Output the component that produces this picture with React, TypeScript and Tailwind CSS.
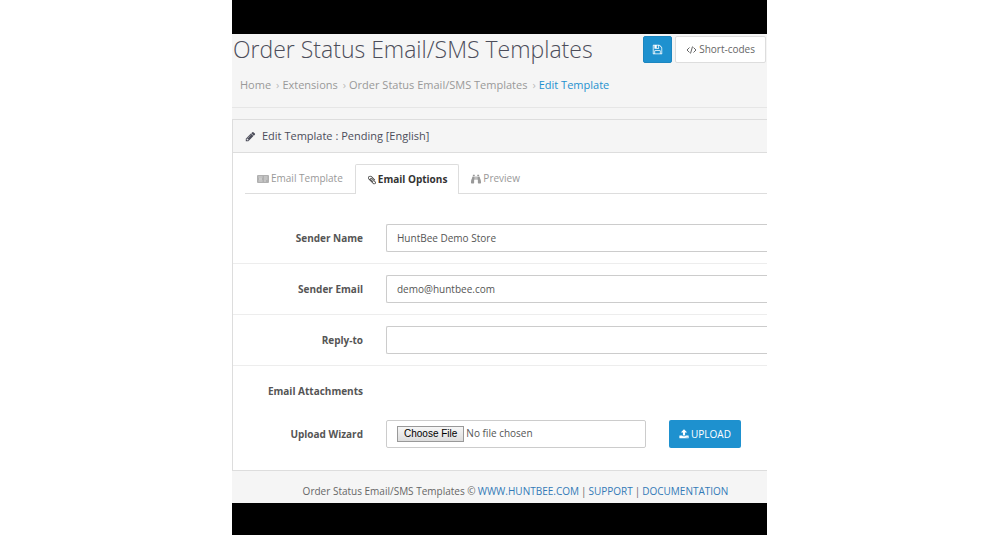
import React from "react";
import { FaBinoculars } from "react-icons/fa";

type GlyphProps = {
  path: string;
  className?: string;
};

const floppy =
  "M512 1536h768v-384h-768v384zm896 0h128v-896q0-14-10-38.5t-20-34.5l-281-281q-10-10-34-20t-39-10v416q0 40-28 68t-68 28h-576q-40 0-68-28t-28-68v-416h-128v1280h128v-416q0-40 28-68t68-28h832q40 0 68 28t28 68v416zm-384-928v-320q0-13-9.5-22.5t-22.5-9.5h-192q-13 0-22.5 9.5t-9.5 22.5v320q0 13 9.5 22.5t22.5 9.5h192q13 0 22.5-9.5t9.5-22.5zm640 32v928q0 40-28 68t-68 28h-1344q-40 0-68-28t-28-68v-1344q0-40 28-68t68-28h928q40 0 88 20t76 48l280 280q28 28 48 76t20 88z";
const pencil =
  "M491 1536l91-91-235-235-91 91v107h128v128h107zm523-928q0-22-22-22-10 0-17 7l-542 542q-7 7-7 17 0 22 22 22 10 0 17-7l542-542q7-7 7-17zm-54-192l416 416-832 832h-416v-416zm683 96q0 53-37 90l-166 166-416-416 166-165q36-38 90-38 53 0 91 38l235 234q37 39 37 91z";
const paperclip =
  "M1596 1385q0 117-79 196t-196 79q-135 0-235-100l-777-776q-113-115-113-271 0-159 110-270t269-111q158 0 273 113l605 606q10 10 10 22 0 16-30.5 46.5t-46.5 30.5q-13 0-23-10l-606-607q-79-77-181-77-106 0-179 75t-73 181q0 105 76 181l776 777q63 63 145 63 64 0 106-42t42-106q0-82-63-145l-581-581q-26-24-60-24-29 0-48 19t-19 48q0 32 25 59l410 410q10 10 10 22 0 16-31 47t-47 31q-12 0-22-10l-410-410q-63-61-63-149 0-82 57-139t139-57q88 0 149 63l581 581q100 98 100 235z";
const upload =
  "M1344 1472q0-26-19-45t-45-19-45 19-19 45 19 45 45 19 45-19 19-45zm256 0q0-26-19-45t-45-19-45 19-19 45 19 45 45 19 45-19 19-45zm128-224v320q0 40-28 68t-68 28h-1472q-40 0-68-28t-28-68v-320q0-40 28-68t68-28h427q21 56 70.5 92t110.5 36h256q61 0 110.5-36t70.5-92h427q40 0 68 28t28 68zm-325-648q-17 40-59 40h-256v448q0 26-19 45t-45 19h-256q-26 0-45-19t-19-45v-448h-256q-42 0-59-40-17-39 14-69l448-448q18-19 45-19t45 19l448 448q31 30 14 69z";

const Glyph = ({ path, className }: GlyphProps) => (
  <svg viewBox="0 0 1792 1792" fill="currentColor" className={className} aria-hidden="true">
    <path d={path} />
  </svg>
);

const CodeIcon = () => (
  <svg
    viewBox="0 0 11 10"
    fill="none"
    stroke="currentColor"
    className="h-2.5 w-[11px]"
    aria-hidden="true">
    <path d="M3.5 2.5 1 5l2.5 2.5M7.5 2.5 10 5 7.5 7.5M6.5 1.5l-2 7" />
  </svg>
);

const CardIcon = () => (
  <svg viewBox="0 0 12 8" className="h-2 w-3" aria-hidden="true">
    <rect width="12" height="8" rx="1" fill="#b0b0b0" />
    <path
      d="M1.5 2h4M1.5 6h4M7 2h3.5M7 4h3.5M7 6h2"
      stroke="#e2e2e2"
      strokeWidth="0.8"
      fill="none"
    />
    <rect x="2" y="3" width="3" height="2" fill="#cccccc" />
  </svg>
);

const crumbs = ["Home", "Extensions", "Order Status Email/SMS Templates"];

const fields = [
  { id: "sender-name", label: "Sender Name", value: "HuntBee Demo Store" },
  { id: "sender-email", label: "Sender Email", value: "demo@huntbee.com" },
  { id: "reply-to", label: "Reply-to", value: "" },
];

const Header = () => (
  <header className="border-b border-[#e6e6e6]">
    <div className="flex h-[31px] items-center justify-between">
      <h1 className="whitespace-nowrap pb-0.5 pl-px text-[23px] leading-7 font-light text-[#4c4d5a]">
        Order Status Email/SMS Templates
      </h1>
      <div className="mr-px flex gap-[3px]">
        <button
          aria-label="Save"
          className="flex h-[27px] w-[29px] items-center justify-center rounded-[2px] border border-[#1c86c0] bg-[#1e91cf] text-white">
          <Glyph path={floppy} className="size-[11px]" />
        </button>
        <button className="flex h-[27px] items-center gap-0.5 whitespace-nowrap rounded-[2px] border border-[#dddddd] bg-white px-2.5 text-[10px] text-[#666666]">
          <CodeIcon />
          Short-codes
        </button>
      </div>
    </div>
    <nav aria-label="Breadcrumb" className="pt-2.5 pb-3">
      <ol className="flex whitespace-nowrap pl-2 text-[11px] leading-5 text-[#999999]">
        {crumbs.map((crumb) => (
          <li key={crumb} className="flex">
            <a href="#">{crumb}</a>
            <span className="pr-[3px] pl-[5px] text-[#bbbbbb]">›</span>
          </li>
        ))}
        <li>
          <a href="#" className="text-[#1e91cf]">
            Edit Template
          </a>
        </li>
      </ol>
    </nav>
  </header>
);

const Tabs = () => (
  <div role="tablist" className="ml-3 flex h-[30px] text-[10px] text-[#999999]">
    <button
      role="tab"
      aria-selected="false"
      className="flex items-center gap-0.5 border-b border-[#dddddd] px-3">
      <CardIcon />
      Email Template
    </button>
    <button
      role="tab"
      aria-selected="true"
      className="flex items-center gap-px rounded-t-[2px] border border-b-0 border-[#dddddd] px-[11px] font-bold text-[#333333]">
      <Glyph path={paperclip} className="size-2.5" />
      Email Options
    </button>
    <button
      role="tab"
      aria-selected="false"
      className="flex flex-1 items-center gap-0.5 border-b border-[#dddddd] px-3">
      <FaBinoculars className="size-2.5" />
      Preview
    </button>
  </div>
);

const Form = () => (
  <form className="pt-[19px] text-[10px] text-[#555555]" onSubmit={(e) => e.preventDefault()}>
    {fields.map((field) => (
      <div key={field.id} className="flex h-[51px] items-center border-b border-[#ededed]">
        <label htmlFor={field.id} className="w-[130px] shrink-0 text-right font-bold">
          {field.label}
        </label>
        <input
          id={field.id}
          type="text"
          defaultValue={field.value}
          className="ml-[23px] h-7 min-w-0 flex-1 rounded-l-[2px] border border-r-0 border-[#cccccc] bg-white px-2.5 text-[10px]"
        />
      </div>
    ))}
    <p className="w-[130px] pt-[15px] text-right leading-5 font-bold">Email Attachments</p>
    <div className="flex items-center pt-[19px] pb-[22px]">
      <label htmlFor="attachment" className="w-[130px] shrink-0 text-right font-bold">
        Upload Wizard
      </label>
      <input
        id="attachment"
        type="file"
        className="ml-[23px] h-7 min-w-0 flex-1 rounded-[2px] border border-[#cccccc] px-2.5 pt-[5px] text-[10px] file:mr-0.5 file:h-4 file:border file:border-solid file:border-[#999999] file:bg-linear-to-b file:from-[#f6f6f6] file:to-[#dddddd] file:px-1.5 file:font-[Liberation_Sans] file:text-[10px] file:leading-3 file:text-black"
      />
      <button className="mr-[26px] ml-[23px] flex h-7 w-[72px] items-center justify-center gap-0.5 rounded-[2px] bg-[#1e91cf] text-[10px] text-white">
        <Glyph path={upload} className="size-2.5" />
        UPLOAD
      </button>
    </div>
  </form>
);

const Footer = () => (
  <footer className="flex h-8 items-center justify-center gap-0.5 whitespace-nowrap pt-2 pl-8 text-[10px] text-[#666666]">
    <span>Order Status Email/SMS Templates ©</span>
    <a href="#" className="text-[#337ab7]">WWW.HUNTBEE.COM</a>
    <span>|</span>
    <a href="#" className="text-[#337ab7]">SUPPORT</a>
    <span>|</span>
    <a href="#" className="text-[#337ab7]">DOCUMENTATION</a>
  </footer>
);

const App = () => {
  return (
    <div className="min-h-screen bg-white pr-px font-['Open_Sans',sans-serif]">
      <div className="mx-auto flex min-h-screen w-full max-w-[535px] flex-col bg-black">
        <main className="mt-[34px] bg-[#f5f5f5]">
          <Header />
          <section className="mt-[11px] border border-r-0 border-[#dddddd] bg-white">
            <h2 className="flex h-[33px] items-center gap-1.5 border-b border-[#dddddd] bg-[#f5f5f5] pl-3 text-[11px] text-[#4c4d5a]">
              <Glyph path={pencil} className="size-[11px]" />
              Edit Template : Pending [English]
            </h2>
            <div className="pt-[11px]">
              <Tabs />
              <Form />
            </div>
          </section>
          <Footer />
        </main>
      </div>
    </div>
  );
};

export default App;
